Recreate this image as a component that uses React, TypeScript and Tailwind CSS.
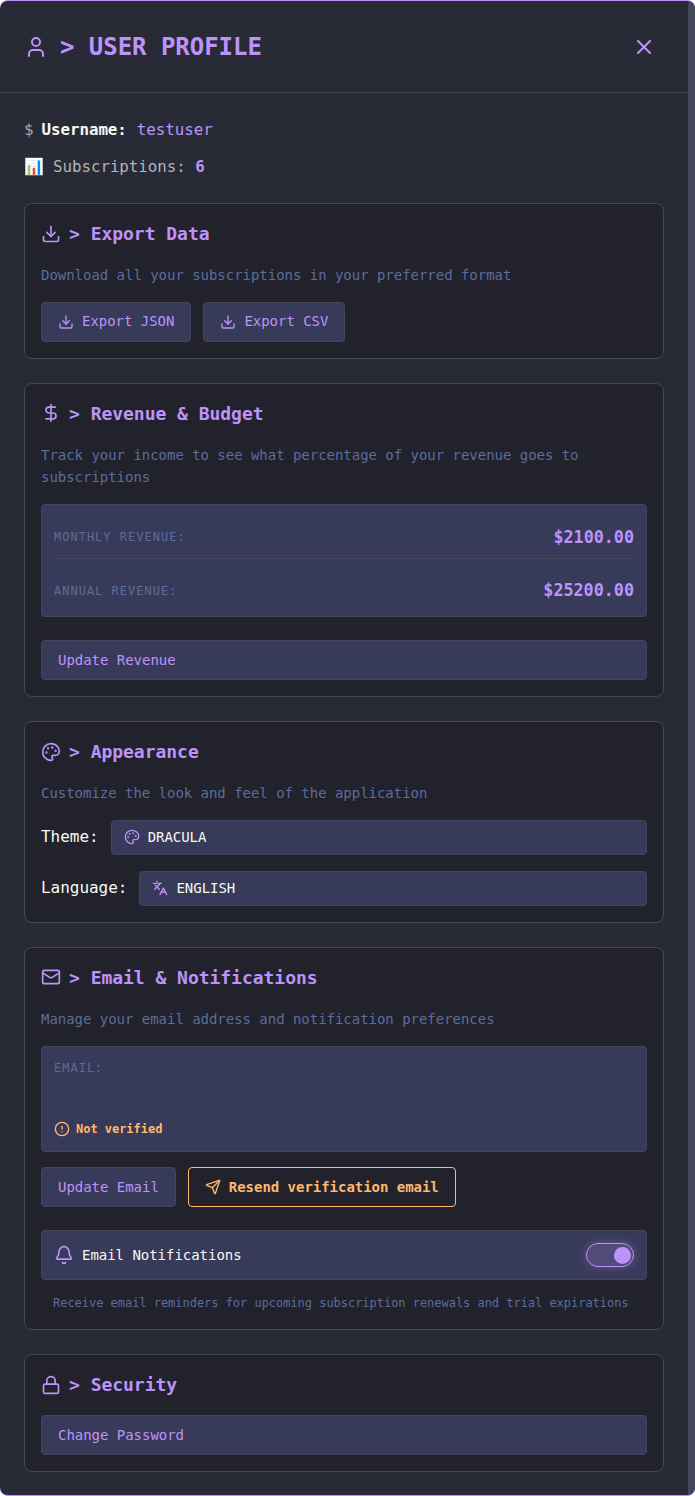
import type { ReactNode } from "react";
import { Bell, CircleAlert, DollarSign, Download, Languages, Lock, Mail, Palette, Send, User, X } from "lucide-react";

const FONT = "font-['DejaVu_Sans_Mono','Liberation_Mono',monospace]";

function Card({ icon, title, children, spacing = "mb-6" }: { icon: ReactNode; title: string; children: ReactNode; spacing?: string }) {
  return (
    <section className={`${spacing} rounded-lg border border-[#44475a] bg-[#21222c] p-4`}>
      <h3 className="mb-[17px] flex h-[27px] items-center gap-2 text-[18px] font-semibold text-[#bd93f9]">
        {icon}
        <span>&gt; {title}</span>
      </h3>
      {children}
    </section>
  );
}

function Desc({ children }: { children: ReactNode }) {
  return <p className="mb-[15px] text-[14px] leading-[22.4px] text-[#5d6c9c]">{children}</p>;
}

function ActionButton({ icon, children, full }: { icon?: ReactNode; children: ReactNode; full?: boolean }) {
  return (
    <button className={`flex h-10 items-center gap-2 rounded border border-[#44475a] bg-[#383a59] px-4 text-[14px] text-[#bd93f9] ${full ? "w-full" : ""}`}>
      {icon}
      {children}
    </button>
  );
}

function SelectRow({ label, icon, value }: { label: string; icon: ReactNode; value: string }) {
  return (
    <div className="flex items-center gap-3">
      <span className="text-[16px] text-[#f8f8f2]">{label}</span>
      <div className="flex h-[35px] flex-1 items-center gap-2 rounded border border-[#44475a] bg-[#383a59] px-3 text-[14px] text-[#f8f8f2]">
        {icon}
        {value}
      </div>
    </div>
  );
}

export default function App() {
  return (
    <div className={`${FONT} flex h-[1496px] w-[695px] overflow-hidden rounded-lg border-y border-[#bd93f9] bg-[#282a36] tracking-[-0.03px]`}>
      <div className="min-w-0 flex-1">
        <header className="flex h-[92px] items-center justify-between border-b border-[#44475a] pl-6 pr-8">
          <h2 className="flex items-center gap-3 text-[24px] font-semibold text-[#bd93f9]">
            <User size={24} />
            <span>&gt; USER PROFILE</span>
          </h2>
          <X size={24} className="text-[#bd93f9]" />
        </header>

        <div className="px-6 pt-[24.6px]">
          <p className="mb-3 flex h-[25px] items-center text-[15.8px]">
            <span className="w-[17.5px] text-[#a5a5a5]">$</span>
            <strong className="mr-[10px] font-semibold text-[#f8f8f2]">Username:</strong>
            <span className="text-[#bd93f9]">testuser</span>
          </p>
          <p className="mb-[23.9px] flex h-[25px] items-center text-[15.8px] text-[#b4b4b4]">
            <span className="w-[29px] text-[16px]">📊</span>
            <span className="mr-[9.5px]">Subscriptions:</span>
            <span className="font-semibold text-[#bd93f9]">6</span>
          </p>

          <Card icon={<Download size={20} />} title="Export Data">
            <Desc>Download all your subscriptions in your preferred format</Desc>
            <div className="flex gap-3">
              <ActionButton icon={<Download size={16} />}>Export JSON</ActionButton>
              <ActionButton icon={<Download size={16} />}>Export CSV</ActionButton>
            </div>
          </Card>

          <Card icon={<DollarSign size={20} />} title="Revenue & Budget" spacing="mb-[24.2px]">
            <Desc>Track your income to see what percentage of your revenue goes to subscriptions</Desc>
            <div className="mb-[23.3px] rounded border border-[#44475a] bg-[#383a59] px-3 pb-1 pt-3">
              <div className="flex h-[42px] items-center justify-between border-b border-[#44475a]">
                <span className="text-[12px] tracking-[1px] text-[#5d6c9c]">MONTHLY REVENUE:</span>
                <span className="text-[16.8px] font-semibold text-[#bd93f9]">$2100.00</span>
              </div>
              <div className="mt-[11px] flex h-[42px] items-center justify-between">
                <span className="text-[12px] tracking-[1px] text-[#5d6c9c]">ANNUAL REVENUE:</span>
                <span className="text-[16.8px] font-semibold text-[#bd93f9]">$25200.00</span>
              </div>
            </div>
            <ActionButton full>Update Revenue</ActionButton>
          </Card>

          <Card icon={<Palette size={20} />} title="Appearance" spacing="mb-[24.4px]">
            <Desc>Customize the look and feel of the application</Desc>
            <div className="flex flex-col gap-4">
              <SelectRow label="Theme:" icon={<Palette size={16} className="text-[#bd93f9]" />} value="DRACULA" />
              <SelectRow label="Language:" icon={<Languages size={16} className="text-[#bd93f9]" />} value="ENGLISH" />
            </div>
          </Card>

          <Card icon={<Mail size={20} />} title="Email & Notifications">
            <Desc>Manage your email address and notification preferences</Desc>
            <div className="mb-[15px] mt-4 flex h-[106px] flex-col justify-between rounded border border-[#44475a] bg-[#383a59] px-3 pb-[13px] pt-[12px]">
              <span className="text-[12px] leading-[18px] tracking-[1px] text-[#5d6c9c]">EMAIL:</span>
              <span className="flex items-center gap-1.5 text-[12px] font-semibold text-[#ffb86c]">
                <CircleAlert size={16} />
                Not verified
              </span>
            </div>
            <div className="mb-[23px] flex gap-3">
              <ActionButton>Update Email</ActionButton>
              <button className="flex h-10 items-center gap-2 rounded border border-[#ffb86c] px-4 text-[14px] font-semibold text-[#ffb86c]">
                <Send size={16} />
                Resend verification email
              </button>
            </div>
            <div className="flex h-[50px] items-center justify-between rounded border border-[#44475a] bg-[#383a59] px-3">
              <span className="flex items-center gap-2 text-[14px] text-[#f8f8f2]">
                <Bell size={20} className="text-[#bd93f9]" />
                Email Notifications
              </span>
              <span className="flex h-6 w-12 items-center justify-end rounded-full border border-[#bd93f9] bg-[#bd93f9]/20 pr-0.5 shadow-[0_0_10px_rgba(189,147,249,0.35)]">
                <span className="size-[17px] rounded-full bg-[#bd93f9]" />
              </span>
            </div>
            <p className="px-3 pt-[14px] text-[12px] leading-[19px] text-[#5d6c9c]">
              Receive email reminders for upcoming subscription renewals and trial expirations
            </p>
          </Card>

          <Card icon={<Lock size={20} />} title="Security">
            <ActionButton full>Change Password</ActionButton>
          </Card>
        </div>
      </div>
      <div className="w-[7px] shrink-0 rounded-t-sm bg-[#44475a]" />
    </div>
  );
}
